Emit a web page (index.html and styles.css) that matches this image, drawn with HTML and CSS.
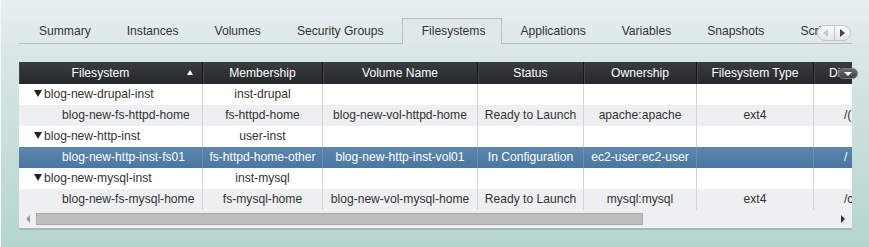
FILE: index.html
```html
<!DOCTYPE html>
<html lang="en">
<head>
  <meta charset="UTF-8">
  <title>Filesystems</title>
  <link rel="stylesheet" href="styles.css">
</head>
<body>
  <div class="panel">
    <div class="tabs">
      <div class="tab">Summary</div>
      <div class="tab">Instances</div>
      <div class="tab">Volumes</div>
      <div class="tab">Security Groups</div>
      <div class="tab active">Filesystems</div>
      <div class="tab">Applications</div>
      <div class="tab">Variables</div>
      <div class="tab">Snapshots</div>
      <div class="tab">Scripts</div>
      <!-- tab scroller -->
      <div class="tab-scroll">
        <span class="scroll-btn"><i class="tri-left"></i></span>
        <span class="scroll-btn"><i class="tri-right"></i></span>
      </div>
    </div>

    <div class="grid">
      <div class="grid-view">
        <div class="row head">
          <div class="cell sorted">Filesystem<i class="sort-up"></i></div>
          <div class="cell">Membership</div>
          <div class="cell">Volume Name</div>
          <div class="cell">Status</div>
          <div class="cell">Ownership</div>
          <div class="cell">Filesystem Type</div>
          <div class="cell last">Directory</div>
        </div>

        <div class="row group">
          <div class="cell name"><i class="toggle"></i>blog-new-drupal-inst</div>
          <div class="cell">inst-drupal</div>
          <div class="cell"></div>
          <div class="cell"></div>
          <div class="cell"></div>
          <div class="cell"></div>
          <div class="cell last"></div>
        </div>
        <div class="row child">
          <div class="cell name">blog-new-fs-httpd-home</div>
          <div class="cell">fs-httpd-home</div>
          <div class="cell">blog-new-vol-httpd-home</div>
          <div class="cell">Ready to Launch</div>
          <div class="cell">apache:apache</div>
          <div class="cell">ext4</div>
          <div class="cell last">/(</div>
        </div>

        <div class="row group">
          <div class="cell name"><i class="toggle"></i>blog-new-http-inst</div>
          <div class="cell">user-inst</div>
          <div class="cell"></div>
          <div class="cell"></div>
          <div class="cell"></div>
          <div class="cell"></div>
          <div class="cell last"></div>
        </div>
        <div class="row child selected">
          <div class="cell name">blog-new-http-inst-fs01</div>
          <div class="cell">fs-httpd-home-other</div>
          <div class="cell">blog-new-http-inst-vol01</div>
          <div class="cell">In Configuration</div>
          <div class="cell">ec2-user:ec2-user</div>
          <div class="cell"></div>
          <div class="cell last">/</div>
        </div>

        <div class="row group">
          <div class="cell name"><i class="toggle"></i>blog-new-mysql-inst</div>
          <div class="cell">inst-mysql</div>
          <div class="cell"></div>
          <div class="cell"></div>
          <div class="cell"></div>
          <div class="cell"></div>
          <div class="cell last"></div>
        </div>
        <div class="row child">
          <div class="cell name">blog-new-fs-mysql-home</div>
          <div class="cell">fs-mysql-home</div>
          <div class="cell">blog-new-vol-mysql-home</div>
          <div class="cell">Ready to Launch</div>
          <div class="cell">mysql:mysql</div>
          <div class="cell">ext4</div>
          <div class="cell last">/c</div>
        </div>
      </div>

      <!-- column menu button -->
      <span class="col-menu"><i class="tri-down"></i></span>

      <div class="hscroll">
        <i class="arrow-left"></i>
        <div class="track"><div class="thumb"></div></div>
        <i class="arrow-right"></i>
      </div>
    </div>
  </div>
</body>
</html>
```

FILE: styles.css
```css
body {
  margin: 0;
  height: 247px;
  overflow: hidden;
  font-family: "Liberation Sans", Arial, sans-serif;
  font-size: 12.1px;
  color: #333;
  background: linear-gradient(#eaf0f2, #dbe7e7 20%, #b3d5cd);
}
.panel {
  height: 247px;
  box-sizing: border-box;
  padding: 18px 18px 0 18px;
  border-left: 1px solid #f4f8f8;
}

/* tabs */
.tabs {
  position: relative;
  display: flex;
  width: 833px;
  height: 26px;
  overflow: hidden;
  box-shadow: inset 0 -1px 0 #bdbcc0;
}
.tab {
  flex: none;
  padding: 0 17px 1px;
  line-height: 24px;
  border: 1px solid transparent;
  border-bottom: none;
  white-space: nowrap;
}
.tab:first-child {
  padding-left: 19px;
}
.tab.active {
  border-color: #bdbcc0;
  background: #e0e9ea;
  padding-right: 16px;
  padding-left: 19px;
}
.tab-scroll {
  position: absolute;
  right: 1px;
  top: 7px;
  display: flex;
  height: 16px;
  width: 34px;
  box-sizing: border-box;
  border: 1px solid #c2c4c6;
  border-radius: 8px;
  background: linear-gradient(#fbfbfb, #e4e6e7);
  overflow: hidden;
}
.scroll-btn {
  flex: 1;
  display: flex;
  align-items: center;
  justify-content: center;
}
.scroll-btn + .scroll-btn {
  border-left: 1px solid #c2c4c6;
}
.tri-left {
  border-top: 4px solid transparent;
  border-bottom: 4px solid transparent;
  border-right: 5px solid #c4c6c8;
}
.tri-right {
  border-top: 4px solid transparent;
  border-bottom: 4px solid transparent;
  border-left: 5px solid #444;
}

/* grid */
.grid {
  position: relative;
  width: 833px;
  margin-top: 18px;
  background: #eeeff0;
  border-bottom: 2px solid #a7b6b2;
}
.grid-view {
  overflow: hidden;
}
.row {
  display: grid;
  grid-template-columns: 184px 120px 155px 106px 113px 117px 160px;
  width: 955px;
  height: 21px;
}
.cell {
  position: relative;
  box-sizing: border-box;
  border-right: 1px solid #d3d4d6;
  text-align: center;
  line-height: 21px;
  white-space: nowrap;
  overflow: hidden;
}
.cell.last {
  text-align: left;
  padding-left: 30px;
}
.head {
  height: 22px;
  background: linear-gradient(#3a3d40, #25282b);
  color: #fff;
}
.head .cell {
  line-height: 22px;
  border-right: 1px solid #15171a;
  box-shadow: inset 1px 0 0 #44474a;
}
.head .cell.sorted {
  padding-right: 20px;
}
.head .cell.last {
  padding-left: 15px;
}
.sort-up {
  position: absolute;
  right: 9px;
  top: 8px;
  border-left: 3px solid transparent;
  border-right: 3px solid transparent;
  border-bottom: 5px solid #fff;
}
.group {
  background: #fff;
}
.child {
  background: #eeeff0;
}
.cell.name {
  text-align: left;
  padding-left: 43px;
}
.group .cell.name {
  padding-left: 15px;
}
.toggle {
  display: inline-block;
  vertical-align: middle;
  margin: -3px 2px 0 0;
  border-left: 4px solid transparent;
  border-right: 4px solid transparent;
  border-top: 7px solid #222;
}
.selected {
  background: linear-gradient(#5b87af, #4a76a0);
  color: #fff;
}
.selected .cell {
  border-right-color: #6a90b4;
}
.col-menu {
  position: absolute;
  right: -6px;
  top: 6px;
  width: 20px;
  height: 11px;
  border-radius: 6px;
  background: linear-gradient(#6a6d70, #3e4144);
  border: 1px solid #777a7d;
  display: flex;
  align-items: center;
  padding-left: 5px;
  box-sizing: border-box;
}
.tri-down {
  border-left: 4px solid transparent;
  border-right: 4px solid transparent;
  border-top: 4px solid #fff;
}

/* horizontal scroller */
.hscroll {
  display: flex;
  align-items: center;
  height: 18px;
  padding: 0 7px 0 7px;
  background: #eeeff0;
}
.arrow-left {
  border-top: 4px solid transparent;
  border-bottom: 4px solid transparent;
  border-right: 4px solid #999;
}
.arrow-right {
  border-top: 4px solid transparent;
  border-bottom: 4px solid transparent;
  border-left: 4px solid #333;
}
.track {
  flex: 1;
  padding: 0 4px 0 6px;
}
.thumb {
  width: 607px;
  height: 12px;
  box-sizing: border-box;
  background: #bdbdbd;
  border: 1px solid #a9a9a9;
}
```
